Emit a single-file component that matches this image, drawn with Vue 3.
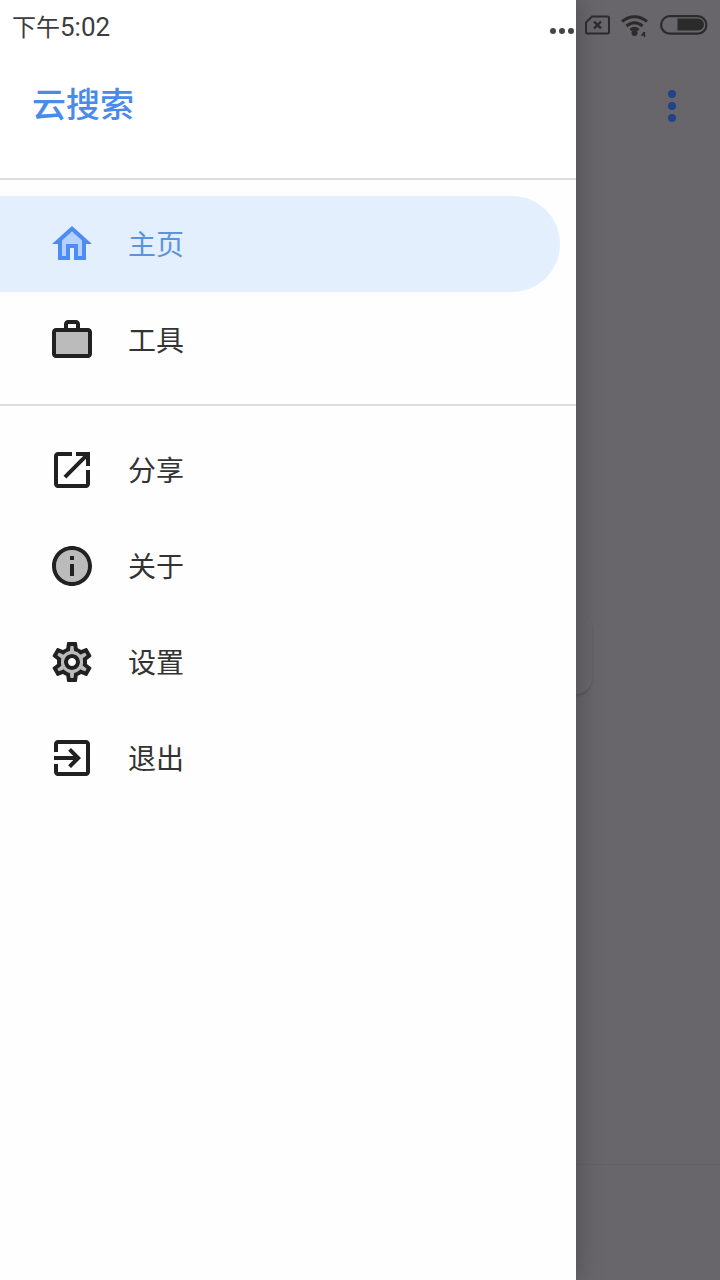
<template>
  <div class="page">
    <!-- 抽屉 -->
    <aside class="drawer">
      <header class="drawer-head">
        <h1 class="brand">云搜索</h1>
      </header>
      <nav class="group group-first">
        <a v-for="item in mainItems" :key="item.label" class="item" :class="{ active: item.active }">
          <svg class="icon" viewBox="0 0 24 24" fill="currentColor">
            <path v-if="item.tint" :d="item.tint" opacity=".3" />
            <path :d="item.path" />
          </svg>
          <span class="label">{{ item.label }}</span>
        </a>
      </nav>
      <nav class="group group-second">
        <a v-for="item in otherItems" :key="item.label" class="item">
          <svg class="icon" viewBox="0 0 24 24" fill="currentColor">
            <path v-if="item.tint" :d="item.tint" opacity=".3" />
            <path :d="item.path" />
          </svg>
          <span class="label">{{ item.label }}</span>
        </a>
      </nav>
    </aside>

    <!-- 遮罩 -->
    <div class="scrim">
      <div class="card-edge"></div>
      <svg class="more" width="8" height="32" viewBox="0 0 8 32" fill="#1f4489">
        <circle cx="4" cy="4" r="4" />
        <circle cx="4" cy="16" r="4" />
        <circle cx="4" cy="28" r="4" />
      </svg>
      <div class="scrim-line"></div>
    </div>

    <!-- 状态栏 -->
    <div class="status">
      <span class="time"><span class="time-cjk">下午</span>5:02</span>
      <div class="status-icons">
        <svg class="dots" width="24" height="6" viewBox="0 0 24 6" fill="#444">
          <circle cx="3" cy="3" r="3" />
          <circle cx="12" cy="3" r="3" />
          <circle cx="21" cy="3" r="3" />
        </svg>
        <svg class="sim" width="25" height="20" viewBox="0 0 25 20" fill="none" stroke="#2b2b2b" stroke-width="2">
          <path d="M7 1.500h15.500a1.500 1.500 0 0 1 1.500 1.500v14a1.500 1.500 0 0 1-1.500 1.500H2.500A1.500 1.500 0 0 1 1 17V7.500z" />
          <path d="M9 6.500l7 7M16 6.500l-7 7" stroke-width="2.400" />
        </svg>
        <svg class="wifi" width="30" height="24" viewBox="0 0 30 24" fill="none" stroke="#2b2b2b" stroke-width="3">
          <path d="M2 7.500C9.500 1 19.500 1 27 7.500" />
          <path d="M6.500 12C11.500 7.800 17.500 7.800 22.500 12" />
          <path d="M10.500 16C13 14 16 14 18.500 16" />
          <circle cx="14.500" cy="19" r="3" fill="#2b2b2b" stroke="none" />
          <path d="M24 18l-2 3h3M24.500 18v5" stroke-width="1.300" />
        </svg>
        <svg class="battery" width="48" height="20" viewBox="0 0 48 20" fill="none">
          <rect x="1.100" y="1.100" width="45.300" height="17.600" rx="8.800" stroke="#2b2b2b" stroke-width="2.200" />
          <path d="M17.500 3.500h20.500a6 6 0 0 1 0 12H17.500z" fill="#2b2b2b" />
        </svg>
      </div>
    </div>
  </div>
</template>

<script setup>
const mainItems = [
  {
    label: '主页',
    active: true,
    path: 'M12 5.69l5 4.5V18h-2v-6H9v6H7v-7.81l5-4.5M12 3L2 12h3v8h6v-6h2v6h6v-8h3L12 3z',
    tint: 'M7 10.19V18h2v-6h6v6h2v-7.81l-5-4.5z'
  },
  {
    label: '工具',
    path: 'M20 6h-4V4c0-1.11-.89-2-2-2h-4c-1.11 0-2 .89-2 2v2H4c-1.11 0-1.99.89-1.99 2L2 19c0 1.11.89 2 2 2h16c1.11 0 2-.89 2-2V8c0-1.11-.89-2-2-2zM10 4h4v2h-4V4zm10 15H4V8h16v11z',
    tint: 'M4 8h16v11H4z'
  }
]

const otherItems = [
  {
    label: '分享',
    path: 'M19 19H5V5h7V3H5c-1.11 0-2 .9-2 2v14c0 1.100.89 2 2 2h14c1.100 0 2-.9 2-2v-7h-2v7zM14 3v2h3.590l-9.830 9.830 1.410 1.410L19 6.410V10h2V3h-7z'
  },
  {
    label: '关于',
    path: 'M11 7h2v2h-2zm0 4h2v6h-2zm1-9C6.480 2 2 6.480 2 12s4.480 10 10 10 10-4.480 10-10S17.520 2 12 2zm0 18c-4.410 0-8-3.590-8-8s3.590-8 8-8 8 3.590 8 8-3.590 8-8 8z',
    tint: 'M12 4c-4.410 0-8 3.590-8 8s3.590 8 8 8 8-3.590 8-8-3.590-8-8-8zm1 13h-2v-6h2v6zm0-8h-2V7h2v2z'
  },
  {
    label: '设置',
    path: 'M19.430 12.980c.04-.32.07-.64.07-.98s-.03-.66-.07-.98l2.110-1.650c.19-.15.24-.42.12-.64l-2-3.460c-.12-.22-.39-.3-.61-.22l-2.490 1c-.52-.4-1.080-.73-1.690-.98l-.38-2.650C14.460 2.180 14.250 2 14 2h-4c-.25 0-.46.18-.49.42l-.38 2.650c-.61.25-1.170.59-1.690.98l-2.490-1c-.23-.09-.49 0-.61.22l-2 3.460c-.13.22-.07.49.12.64l2.110 1.650c-.04.32-.07.65-.07.98s.03.66.07.98l-2.110 1.650c-.19.15-.24.42-.12.64l2 3.460c.12.22.39.3.61.22l2.490-1c.52.4 1.080.73 1.690.98l.38 2.650c.03.24.24.42.49.42h4c.25 0 .46-.18.49-.42l.38-2.650c.61-.25 1.170-.59 1.690-.98l2.490 1c.23.09.49 0 .61-.22l2-3.460c.12-.22.07-.49-.12-.64l-2.110-1.650zM17.450 11.270c.04.31.05.52.05.73 0 .21-.02.43-.05.73l-.14 1.130.89.7 1.080.84-.7 1.210-1.270-.51-1.040-.42-.9.68c-.43.32-.84.56-1.250.73l-1.060.43-.16 1.130-.2 1.350h-1.400l-.19-1.350-.16-1.130-1.060-.43c-.43-.18-.83-.41-1.230-.71l-.91-.7-1.060.43-1.270.51-.7-1.210 1.080-.84.89-.7-.14-1.130c-.03-.31-.05-.54-.05-.74s.02-.43.05-.73l.14-1.130-.89-.7-1.080-.84.7-1.210 1.270.51 1.040.42.9-.68c.43-.32.84-.56 1.250-.73l1.060-.43.16-1.130.2-1.350h1.390l.19 1.350.16 1.130 1.060.43c.43.18.83.41 1.230.71l.91.7 1.060-.43 1.270-.51.7 1.210-1.070.85-.89.7.14 1.130zM12 8c-2.210 0-4 1.790-4 4s1.790 4 4 4 4-1.790 4-4-1.790-4-4-4zm0 6c-1.100 0-2-.9-2-2s.9-2 2-2 2 .9 2 2-.9 2-2 2z',
    tint: 'M19.280 8.600l-.7-1.210-1.270.51-1.060.43-.91-.7c-.39-.3-.8-.54-1.230-.71l-1.060-.43-.16-1.130L12.700 4h-1.390l-.2 1.350-.16 1.130-1.060.44c-.41.17-.82.41-1.250.73l-.9.68-1.040-.42-1.270-.52-.7 1.210 1.080.84.89.7-.14 1.130c-.03.3-.05.53-.05.73s.02.43.05.73l.14 1.130-.89.7-1.080.84.7 1.210 1.270-.51 1.040-.42.9.68c.43.32.84.56 1.250.73l1.060.43.16 1.130.2 1.360h1.390l.19-1.350.16-1.130 1.060-.43c.41-.17.82-.41 1.250-.73l.9-.68 1.040.42 1.270.51.7-1.210-1.080-.84-.89-.7.14-1.130c.04-.31.05-.52.05-.73 0-.21-.02-.43-.05-.73l-.14-1.130.89-.7 1.100-.84zM12 16c-2.210 0-4-1.790-4-4s1.790-4 4-4 4 1.790 4 4-1.790 4-4 4z'
  },
  {
    label: '退出',
    path: 'M10.090 15.590L11.500 17l5-5-5-5-1.410 1.410L12.670 11H3v2h9.670l-2.580 2.590zM19 3H5c-1.110 0-2 .9-2 2v4h2V5h14v14H5v-4H3v4c0 1.100.89 2 2 2h14c1.100 0 2-.9 2-2V5c0-1.100-.9-2-2-2z'
  }
]
</script>

<style scoped>
.page {
  position: relative;
  display: flex;
  width: 720px;
  height: 1280px;
  overflow: hidden;
  background: #68666a;
  font-family: "Noto Sans CJK SC", "Noto Sans", sans-serif;
}

.drawer {
  position: relative;
  z-index: 2;
  flex: 0 0 576px;
  background: #fefefe;
  box-shadow: 0 0 24px rgba(0, 0, 0, 0.28);
}

.drawer-head {
  display: flex;
  align-items: center;
  height: 151px;
  padding: 27px 32px 0;
  background: #fff;
  border-bottom: 2px solid #dedede;
}

.brand {
  margin: 0;
  font-size: 34px;
  font-weight: 500;
  line-height: 48px;
  color: #4a8ae8;
}

.group {
  display: flex;
  flex-direction: column;
}

.group-first {
  padding: 16px 0;
  border-bottom: 2px solid #dedede;
}

.group-second {
  padding-top: 16px;
}

.item {
  display: flex;
  align-items: center;
  gap: 32px;
  height: 96px;
  padding-left: 48px;
  color: #212121;
}

.item.active {
  width: 512px;
  border-radius: 0 48px 48px 0;
  background: #e4effe;
  color: #4d8bf5;
}

.icon {
  flex: none;
  width: 48px;
  height: 48px;
}

.label {
  margin-bottom: 2px;
  font-size: 28px;
  line-height: 48px;
  color: #333;
}

.active .label {
  color: #5b94dc;
}

.scrim {
  position: relative;
  flex: 1;
}

.card-edge {
  position: absolute;
  left: -40px;
  top: 612px;
  width: 56px;
  height: 82px;
  border-radius: 16px;
  box-shadow: 0 2px 3px rgba(0, 0, 0, 0.16);
}

.more {
  position: absolute;
  left: 92px;
  top: 90px;
}

.scrim-line {
  position: absolute;
  left: 0;
  right: 0;
  top: 1164px;
  height: 1px;
  background: rgba(0, 0, 0, 0.03);
}

.status {
  position: absolute;
  z-index: 3;
  top: 0;
  left: 0;
  right: 0;
  display: flex;
  justify-content: space-between;
  height: 52px;
  padding: 0 12px;
}

.time {
  font-family: Roboto, "Noto Sans CJK SC", sans-serif;
  font-size: 26px;
  line-height: 54px;
  color: #3c3c3c;
}

.time-cjk {
  font-size: 24px;
}

.status-icons {
  display: flex;
  align-items: flex-start;
}

.dots {
  margin-top: 28px;
}

.sim {
  margin: 15px 0 0 11px;
}

.wifi {
  margin: 14px 0 0 10px;
}

.battery {
  margin: 15px 0 0 10px;
}
</style>

<style>
body {
  background: #68666a;
}
</style>
